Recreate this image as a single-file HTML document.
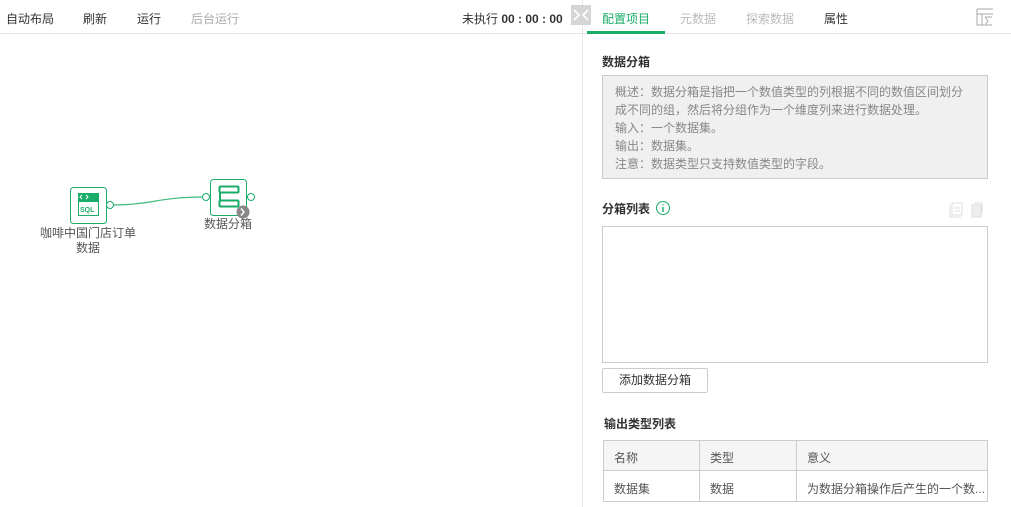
<!DOCTYPE html>
<html><head><meta charset="utf-8"><style>
*{margin:0;padding:0;box-sizing:border-box}
body{width:1011px;height:507px;background:#fff;font-family:"Liberation Sans","Noto Sans CJK SC",sans-serif;font-size:12px;color:#333;position:relative;overflow:hidden}
.a{position:absolute;white-space:nowrap}
</style></head><body>
<div class="a" style="left:0;top:33px;width:1011px;height:1px;background:#e6e6e6"></div>
<div class="a" style="left:582px;top:0;width:1px;height:507px;background:#e6e6e6"></div>
<div class="a" style="left:6px;top:10px;color:#333">自动布局</div>
<div class="a" style="left:83px;top:10px;color:#333">刷新</div>
<div class="a" style="left:137px;top:10px;color:#333">运行</div>
<div class="a" style="left:191px;top:10px;color:#aaa">后台运行</div>
<div class="a" style="left:462px;top:10px;color:#333">未执行 <b>00 : 00 : 00</b></div>
<div class="a" style="left:571px;top:5px;width:20px;height:20px;background:#d6d6d6"><svg width="20" height="20"><path d="M3 5l5 5-5 5M17 5l-5 5 5 5" stroke="#fff" stroke-width="1.6" fill="none"/></svg></div>
<div class="a" style="left:602px;top:10px;color:#1aad6a">配置项目</div>
<div class="a" style="left:587px;top:31px;width:78px;height:3px;background:#1aad6a"></div>
<div class="a" style="left:680px;top:10px;color:#bbb">元数据</div>
<div class="a" style="left:746px;top:10px;color:#bbb">探索数据</div>
<div class="a" style="left:824px;top:10px;color:#333">属性</div>
<svg class="a" style="left:976px;top:8px" width="18" height="18"><path d="M1 1h16M1 1v16h7M1 6h16M6 6v11M9 9h7M9 9l3 4-3 4h7" stroke="#aaa" fill="none"/></svg>

<svg class="a" style="left:0;top:0" width="582" height="507">
<path d="M113 205 C150 205 160 197 203 197" stroke="#3dbb7e" stroke-width="1.2" fill="none"/>
<rect x="70.5" y="187.5" width="36" height="36" rx="3" fill="#fff" stroke="#1aad6a"/>
<rect x="78" y="193" width="21" height="8" fill="#1aad6a"/>
<path d="M82 195l-2 2 2 2M86 195l2 2-2 2" stroke="#fff" fill="none"/>
<rect x="78.5" y="201.5" width="20" height="14" fill="#fff" stroke="#1aad6a"/>
<text x="80" y="212" font-size="7" font-weight="bold" fill="#1aad6a" font-family="Liberation Sans">SQL</text>
<circle cx="110" cy="205" r="3.5" fill="#fff" stroke="#1aad6a"/>
<rect x="210.5" y="179.5" width="36" height="36" rx="3" fill="#fff" stroke="#1aad6a"/>
<rect x="219.5" y="186.5" width="19" height="6" rx="1" fill="none" stroke="#1aad6a" stroke-width="2"/>
<rect x="219.5" y="200.5" width="19" height="6" rx="1" fill="none" stroke="#1aad6a" stroke-width="2"/>
<path d="M220 192v9" stroke="#1aad6a" stroke-width="2"/>
<circle cx="206" cy="197" r="3.5" fill="#fff" stroke="#1aad6a"/>
<circle cx="251" cy="197" r="3.5" fill="#fff" stroke="#1aad6a"/>
<circle cx="243" cy="212" r="6.5" fill="#888"/>
<path d="M241 208.5l3 3.5-3 3.5" stroke="#fff" stroke-width="1.5" fill="none"/>
</svg>
<div class="a" style="left:40px;top:224px;color:#555;font-size:12px">咖啡中国门店订单</div>
<div class="a" style="left:76px;top:239px;color:#555">数据</div>
<div class="a" style="left:204px;top:215px;color:#555">数据分箱</div>

<div class="a" style="left:602px;top:53px;font-weight:bold">数据分箱</div>
<div class="a" style="left:602px;top:75px;width:386px;height:104px;background:#f0f0f0;border:1px solid #ccc"></div>
<div class="a" style="left:615px;top:83px;color:#888;line-height:18px;white-space:normal;width:352px">概述：数据分箱是指把一个数值类型的列根据不同的数值区间划分成不同的组，然后将分组作为一个维度列来进行数据处理。<br>输入：一个数据集。<br>输出：数据集。<br>注意：数据类型只支持数值类型的字段。</div>
<div class="a" style="left:602px;top:200px;font-weight:bold">分箱列表</div>
<svg class="a" style="left:655px;top:200px" width="16" height="16"><circle cx="8" cy="8" r="6.5" fill="none" stroke="#1aad6a"/><path d="M8 7v5M8 4.5v1" stroke="#1aad6a" stroke-width="1.4"/></svg>
<svg class="a" style="left:947px;top:201px" width="40" height="18"><path d="M3 4v12h11M5 2h10v12H5zM7 7h6M7 10h6" stroke="#ddd" fill="none"/><rect x="25" y="4" width="9" height="12" fill="#eee" stroke="#ddd"/><path d="M27 2h8v10" stroke="#ddd" fill="none"/></svg>
<div class="a" style="left:602px;top:226px;width:386px;height:137px;border:1px solid #ccc"></div>
<div class="a" style="left:602px;top:368px;width:106px;height:25px;border:1px solid #ccc;border-radius:2px;text-align:center;line-height:23px;color:#333">添加数据分箱</div>
<div class="a" style="left:604px;top:415px;font-weight:bold">输出类型列表</div>
<div class="a" style="left:603px;top:440px;width:385px;height:62px;border:1px solid #ccc"></div>
<div class="a" style="left:604px;top:441px;width:383px;height:30px;background:#f5f5f5;border-bottom:1px solid #ccc"></div>
<div class="a" style="left:699px;top:441px;width:1px;height:61px;background:#ccc"></div>
<div class="a" style="left:796px;top:441px;width:1px;height:61px;background:#ccc"></div>
<div class="a" style="left:614px;top:449px;color:#555">名称</div>
<div class="a" style="left:710px;top:449px;color:#555">类型</div>
<div class="a" style="left:807px;top:449px;color:#555">意义</div>
<div class="a" style="left:614px;top:480px;color:#555">数据集</div>
<div class="a" style="left:710px;top:480px;color:#555">数据</div>
<div class="a" style="left:807px;top:480px;color:#555">为数据分箱操作后产生的一个数...</div>
</body></html>
